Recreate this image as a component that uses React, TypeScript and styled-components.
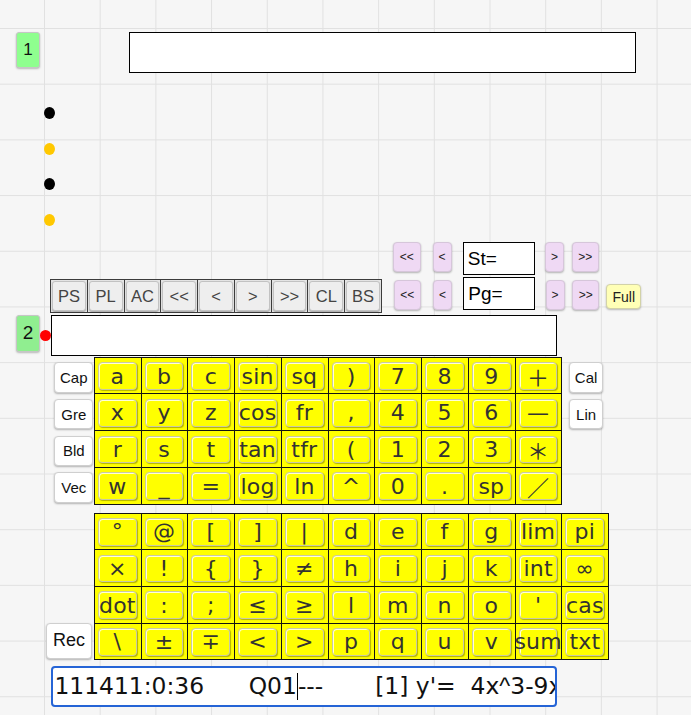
import React from "react";
import styled, { createGlobalStyle } from "styled-components";

const GlobalStyle = createGlobalStyle`
  html, body { margin: 0; padding: 0; }
  body {
    min-height: 715px;
    background-color: #f6f6f6;
    background-image:
      linear-gradient(to right, #e1e1e1 1px, transparent 1px),
      linear-gradient(to bottom, #e1e1e1 1px, transparent 1px);
    background-size: 55.7px 55.7px;
    background-position: 44px 28px;
    font-family: "Liberation Sans", Arial, sans-serif;
    overflow: hidden;
  }
`;

const Page = styled.div`
  display: flex;
  flex-direction: column;
  width: 691px;
`;

const TopRow = styled.div`
  display: flex;
  align-items: flex-start;
  margin-top: 32px;
  padding-left: 16px;
`;

const GreenTag = styled.div<{ $tone: string; $h: number; $fs: number }>`
  box-sizing: border-box;
  width: 24px;
  height: ${(p) => p.$h}px;
  background: ${(p) => p.$tone};
  border: 1px solid #c6c6c6;
  border-radius: 3px;
  box-shadow: 0 1px 2px rgba(0, 0, 0, 0.25);
  display: flex;
  align-items: center;
  justify-content: center;
  font-size: ${(p) => p.$fs}px;
  color: #111;
  flex-shrink: 0;
`;

const WideField = styled.div`
  box-sizing: border-box;
  margin-left: 89px;
  width: 507px;
  height: 41px;
  background: #fff;
  border: 1px solid #000;
`;

const DotList = styled.div`
  display: flex;
  flex-direction: column;
  gap: 23.6px;
  margin-top: 34px;
  padding-left: 44px;
`;

const Dot = styled.div<{ $c: string }>`
  width: 11px;
  height: 12px;
  border-radius: 50%;
  background: ${(p) => p.$c};
`;

const NavLine = styled.div<{ $end?: boolean }>`
  display: flex;
  align-items: ${(p) => (p.$end ? "flex-end" : "flex-start")};
  height: 32.5px;
`;

const NavBtn = styled.div<{ $w: number; $ml: number }>`
  box-sizing: border-box;
  width: ${(p) => p.$w}px;
  height: 29.5px;
  margin-left: ${(p) => p.$ml}px;
  background: #efd9f4;
  border: 1px solid #d6c6da;
  border-radius: 4px;
  box-shadow: 0 1px 2px rgba(0, 0, 0, 0.28);
  display: flex;
  align-items: center;
  justify-content: center;
  font-size: 12px;
  color: #222;
  flex-shrink: 0;
`;

const NavInput = styled.div<{ $ml: number }>`
  box-sizing: border-box;
  width: 72px;
  height: 32.5px;
  margin-left: ${(p) => p.$ml}px;
  background: #fff;
  border: 1px solid #000;
  padding-left: 4px;
  display: flex;
  align-items: center;
  font-size: 19px;
  color: #000;
  flex-shrink: 0;
`;

const FirstNav = styled(NavLine)`
  margin-top: 16.5px;
  padding-left: 393px;
`;

const ToolLine = styled.div`
  display: flex;
  align-items: flex-start;
  margin-top: 2.7px;
  padding-left: 50px;
`;

const Toolbar = styled.div`
  box-sizing: border-box;
  margin-top: 1.3px;
  width: 332px;
  height: 34.5px;
  display: grid;
  grid-template-columns: repeat(9, 1fr);
  gap: 1px;
  padding: 1px;
  background: #3c3c3c;
  margin-right: 11.5px;
`;

const ToolCell = styled.div`
  background: #e4e4e4;
  padding: 1px;
  display: flex;
`;

const ToolBtn = styled.div`
  flex: 1;
  box-sizing: border-box;
  background: #eeeeee;
  border: 1px solid #c2c2c2;
  border-radius: 3px;
  box-shadow: 0 1px 1px rgba(0, 0, 0, 0.25);
  display: flex;
  align-items: center;
  justify-content: center;
  font-size: 16.5px;
  color: #444;
`;

const FullBtn = styled.div`
  box-sizing: border-box;
  width: 35px;
  height: 25px;
  margin-left: 7px;
  margin-bottom: 0.7px;
  background: #ffffb6;
  border: 1px solid #d2d2a8;
  border-radius: 4px;
  box-shadow: 0 1px 2px rgba(0, 0, 0, 0.25);
  display: flex;
  align-items: center;
  justify-content: center;
  font-size: 14px;
  color: #222;
`;

const FieldRow = styled.div`
  display: flex;
  align-items: flex-start;
  margin-top: 1.3px;
  padding-left: 16px;
`;

const RedDot = styled.div`
  width: 11px;
  height: 11px;
  margin-top: 15.2px;
  border-radius: 50%;
  background: #ff0000;
  flex-shrink: 0;
`;

const MainField = styled.div`
  box-sizing: border-box;
  width: 506px;
  height: 41px;
  margin-top: 0.7px;
  background: #fff;
  border: 1px solid #000;
`;

const PadRow = styled.div<{ $mt: number; $pl: number }>`
  display: flex;
  align-items: flex-start;
  margin-top: ${(p) => p.$mt}px;
  padding-left: ${(p) => p.$pl}px;
`;

const SideCol = styled.div<{ $ml: number; $mr: number }>`
  display: flex;
  flex-direction: column;
  gap: 6.2px;
  margin-top: 5.2px;
  margin-left: ${(p) => p.$ml}px;
  margin-right: ${(p) => p.$mr}px;
`;

const SideBtn = styled.div<{ $w: number; $h: number; $fs: number }>`
  box-sizing: border-box;
  width: ${(p) => p.$w}px;
  height: ${(p) => p.$h}px;
  background: #fff;
  border: 1px solid #cfcfcf;
  border-radius: 4px;
  box-shadow: 0 1px 2px rgba(0, 0, 0, 0.28);
  display: flex;
  align-items: center;
  justify-content: center;
  font-size: ${(p) => p.$fs}px;
  color: #111;
  flex-shrink: 0;
`;

const RecBtn = styled(SideBtn)`
  align-self: flex-end;
  margin-bottom: 1px;
  margin-right: 1.7px;
`;

const Keypad = styled.div<{ $cols: number }>`
  display: grid;
  grid-template-columns: repeat(${(p) => p.$cols}, 45.75px);
  grid-auto-rows: 35.7px;
  gap: 1px;
  padding: 1px;
  background: #141414;
  flex-shrink: 0;
`;

const KeyCell = styled.div`
  background: #ffff00;
  padding: 4.5px 4px 3.5px 3px;
  display: flex;
  min-width: 0;
`;

const KeyFace = styled.div`
  flex: 1;
  min-width: 0;
  box-sizing: border-box;
  background: #ffff00;
  border: 1px solid #c9c9a6;
  border-radius: 4px;
  box-shadow: inset 1px 1px 0 #ffffd8, 1px 1px 1px rgba(0, 0, 0, 0.3);
  display: flex;
  align-items: center;
  justify-content: center;
  font-family: "DejaVu Sans", "Noto Sans CJK JP", sans-serif;
  font-size: 22px;
  color: #333;
  white-space: nowrap;
  overflow: visible;
  letter-spacing: 0.2px;
`;

const StatusField = styled.div`
  box-sizing: border-box;
  margin-top: 6px;
  margin-left: 51.4px;
  width: 505.6px;
  height: 40.7px;
  background: #fff;
  border: 2px solid #2564d6;
  border-radius: 4px;
  padding-left: 1px;
  overflow: hidden;
  white-space: pre;
  line-height: 36.7px;
  font-family: "DejaVu Sans", "Noto Sans CJK JP", sans-serif;
  font-size: 23.4px;
  color: #111;
`;

const Caret = styled.span`
  display: inline-block;
  width: 1px;
  height: 27px;
  background: #000;
  vertical-align: middle;
  margin-top: -3px;
`;

const NarrowGlyph = styled.span`
  font-family: "Liberation Sans", Arial, sans-serif;
`;

const pad1 = [
  ["a", "b", "c", "sin", "sq", ")", "7", "8", "9", "＋"],
  ["x", "y", "z", "cos", "fr", ",", "4", "5", "6", "—"],
  ["r", "s", "t", "tan", "tfr", "(", "1", "2", "3", "＊"],
  ["w", "_", "=", "log", "ln", "^", "0", ".", "sp", "／"],
];

const pad2 = [
  ["°", "@", "[", "]", "|", "d", "e", "f", "g", "lim", "pi"],
  ["×", "!", "{", "}", "≠", "h", "i", "j", "k", "int", "∞"],
  ["dot", ":", ";", "≤", "≥", "l", "m", "n", "o", "'", "cas"],
  ["\\", "±", "∓", "<", ">", "p", "q", "u", "v", "sum", "txt"],
];

const tools = ["PS", "PL", "AC", "<<", "<", ">", ">>", "CL", "BS"];

function NavControls({ label, end }: { label: string; end?: boolean }) {
  return (
    <>
      <NavBtn $w={27.5} $ml={0}>&lt;&lt;</NavBtn>
      <NavBtn $w={19} $ml={12}>&lt;</NavBtn>
      <NavInput $ml={11.3}>{label}</NavInput>
      <NavBtn $w={19} $ml={10.3}>&gt;</NavBtn>
      <NavBtn $w={27} $ml={7.7}>&gt;&gt;</NavBtn>
      {end ? <FullBtn>Full</FullBtn> : null}
    </>
  );
}

function Pad({ rows }: { rows: string[][] }) {
  return (
    <Keypad $cols={rows[0].length}>
      {rows.flat().map((k, i) => (
        <KeyCell key={i}>
          <KeyFace>{k}</KeyFace>
        </KeyCell>
      ))}
    </Keypad>
  );
}

export default function App() {
  return (
    <>
      <GlobalStyle />
      <Page>
        <TopRow>
          <GreenTag $tone="#8fff8f" $h={36} $fs={17}>1</GreenTag>
          <WideField />
        </TopRow>

        <DotList>
          <Dot $c="#000" />
          <Dot $c="#ffc800" />
          <Dot $c="#000" />
          <Dot $c="#ffc800" />
        </DotList>

        <FirstNav>
          <NavControls label="St=" />
        </FirstNav>

        <ToolLine>
          <Toolbar>
            {tools.map((t) => (
              <ToolCell key={t}>
                <ToolBtn>{t}</ToolBtn>
              </ToolCell>
            ))}
          </Toolbar>
          <NavLine $end>
            <NavControls label="Pg=" end />
          </NavLine>
        </ToolLine>

        <FieldRow>
          <GreenTag $tone="#90ee90" $h={37.4} $fs={19}>2</GreenTag>
          <RedDot />
          <MainField />
        </FieldRow>

        <PadRow $mt={0.5} $pl={0}>
          <SideCol $ml={54.3} $mr={0.7}>
            <SideBtn $w={39} $h={30.6} $fs={15}>Cap</SideBtn>
            <SideBtn $w={39} $h={30.6} $fs={15}>Gre</SideBtn>
            <SideBtn $w={39} $h={30.6} $fs={15}>Bld</SideBtn>
            <SideBtn $w={39} $h={30.6} $fs={15}>Vec</SideBtn>
          </SideCol>
          <Pad rows={pad1} />
          <SideCol $ml={6.3} $mr={0}>
            <SideBtn $w={34.7} $h={30.6} $fs={15}>Cal</SideBtn>
            <SideBtn $w={34.7} $h={30.6} $fs={15}>Lin</SideBtn>
          </SideCol>
        </PadRow>

        <PadRow $mt={8} $pl={45.7}>
          <RecBtn $w={46.6} $h={36.7} $fs={18}>Rec</RecBtn>
          <Pad rows={pad2} />
        </PadRow>

        <StatusField>
          {"111411:0:36      Q01"}
          <Caret />
          {"---       [1] y'=  4x"}
          <NarrowGlyph>^</NarrowGlyph>
          {"3-9x"}
        </StatusField>
      </Page>
    </>
  );
}
